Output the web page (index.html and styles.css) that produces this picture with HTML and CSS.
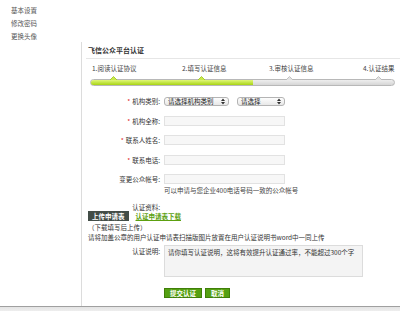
FILE: index.html
```html
<!DOCTYPE html>
<html lang="zh-CN">
<head>
    <meta charset="UTF-8">
    <title>飞信公众平台认证</title>
    <link rel="stylesheet" href="styles.css">
</head>
<body>

    <ul class="side-menu">
        <li>基本设置</li>
        <li>修改密码</li>
        <li>更换头像</li>
    </ul>

    <div class="main">
        <div class="panel-title">飞信公众平台认证</div>

        <div class="steps">
            <div class="step-labels">
                <span class="step step-1">1.阅读认证协议</span>
                <span class="step step-2">2.填写认证信息</span>
                <span class="step step-3">3.审核认证信息</span>
                <span class="step step-4">4.认证结果</span>
            </div>
            <div class="progress">
                <div class="progress-fill"></div>
                <svg class="notch notch-1" width="7" height="4" viewBox="0 0 7 4"><path d="M0 4 L3.5 0.5 L7 4" fill="#c9ea4a" stroke="#9cc21e" stroke-width="0.8"/></svg>
                <svg class="notch notch-2" width="7" height="4" viewBox="0 0 7 4"><path d="M0 4 L3.5 0.5 L7 4" fill="#c9ea4a" stroke="#9cc21e" stroke-width="0.8"/></svg>
                <svg class="notch notch-3" width="7" height="4" viewBox="0 0 7 4"><path d="M0 4 L3.5 0.5 L7 4" fill="#e2e2e2" stroke="#b8b8b8" stroke-width="0.8"/></svg>
                <svg class="notch notch-4" width="7" height="4" viewBox="0 0 7 4"><path d="M0 4 L3.5 0.5 L7 4" fill="#e2e2e2" stroke="#b8b8b8" stroke-width="0.8"/></svg>
            </div>
        </div>

        <div class="form">
            <div class="row">
                <label class="row-label"><em>*</em>机构类别:</label>
                <div class="row-field">
                    <span class="select-box select-wide">请选择机构类别
                        <svg class="arrows" width="4" height="7" viewBox="0 0 4 7"><path d="M0 3 L2 0.5 L4 3 Z M0 4 L2 6.5 L4 4 Z" fill="#333"/></svg>
                    </span>
                    <span class="select-box select-narrow">请选择
                        <svg class="arrows" width="4" height="7" viewBox="0 0 4 7"><path d="M0 3 L2 0.5 L4 3 Z M0 4 L2 6.5 L4 4 Z" fill="#333"/></svg>
                    </span>
                </div>
            </div>
            <div class="row">
                <label class="row-label"><em>*</em>机构全称:</label>
                <div class="row-field"><input type="text" class="text-input"></div>
            </div>
            <div class="row">
                <label class="row-label"><em>*</em>联系人姓名:</label>
                <div class="row-field"><input type="text" class="text-input"></div>
            </div>
            <div class="row">
                <label class="row-label"><em>*</em>联系电话:</label>
                <div class="row-field"><input type="text" class="text-input"></div>
            </div>
            <div class="row">
                <label class="row-label">变更公众帐号:</label>
                <div class="row-field"><input type="text" class="text-input"></div>
            </div>
            <div class="hint">可以申请与您企业400电话号码一致的公众帐号</div>

            <div class="row row-plain">
                <label class="row-label">认证资料:</label>
            </div>
            <div class="upload">
                <button class="upload-btn">上传申请表</button>
                <a class="download-link" href="#">认证申请表下载</a>
            </div>
            <div class="note">（下载填写后上传）</div>
            <div class="note">请将加盖公章的用户认证申请表扫描版图片放置在用户认证说明书word中一同上传</div>

            <div class="row row-textarea">
                <label class="row-label">认证说明:</label>
                <div class="row-field">
                    <textarea class="desc" placeholder="请你填写认证说明，这将有效提升认证通过率，不能超过300个字"></textarea>
                </div>
            </div>

            <div class="actions">
                <button class="green-btn">提交认证</button>
                <button class="green-btn">取消</button>
            </div>
        </div>
    </div>

    <div class="footer-bar"></div>

</body>
</html>
```

FILE: styles.css
```css
body {
    margin: 0;
    font-family: "Noto Sans CJK SC", "Noto Sans", sans-serif;
    font-size: 6.5px;
    color: #333;
    background-color: #fff;
    overflow: hidden;
}
.side-menu {
    list-style-type: none;
    margin: 0;
    padding: 4px 0 0 11px;
    height: 38px;
    color: #555;
}
.side-menu li {
    line-height: 13px;
}
.main {
    margin-left: 81px;
    border-left: 1px solid #dcdcdc;
    height: 264px;
}
.panel-title {
    margin-left: 4px;
    padding: 4px 0 3px 2px;
    line-height: 9px;
    font-size: 7px;
    font-weight: bold;
    color: #333;
    border-bottom: 1px solid #e6e6e6;
}
.steps {
    margin: 5px 0 0 8px;
    width: 305px;
}
.step-labels {
    display: flex;
    line-height: 8px;
    color: #444;
    padding-left: 2px;
}
.step-1 { width: 90px; }
.step-2 { width: 87px; }
.step-3 { width: 94px; }
.progress {
    position: relative;
    margin-top: 7px;
    height: 5px;
    border: 1px solid #b8b8b8;
    border-radius: 4px;
    background: linear-gradient(#eeeeee, #d6d6d6);
}
.progress-fill {
    width: 162px;
    height: 100%;
    border-radius: 4px 0 0 4px;
    background: linear-gradient(#e0f77a, #a8d414);
}
.notch {
    position: absolute;
    top: -4px;
}
.notch-1 { left: 19px; }
.notch-2 { left: 107px; }
.notch-3 { left: 195px; }
.notch-4 { left: 284px; }

.form {
    margin-top: 10px;
}
.row {
    display: grid;
    grid-template-columns: 78px 1fr;
    column-gap: 4px;
    align-items: center;
    height: 10px;
    margin-bottom: 9.5px;
}
.row-label {
    text-align: right;
    color: #333;
    white-space: nowrap;
}
.row-label em {
    font-style: normal;
    color: #e0201a;
    margin-right: 2px;
}
.row-field {
    display: flex;
    gap: 8px;
    align-items: center;
}
.text-input {
    box-sizing: border-box;
    width: 121px;
    height: 10px;
    margin: 0;
    padding: 0;
    border: 1px solid #e2e2e2;
    background-color: #f7f7f7;
}
.select-box {
    position: relative;
    box-sizing: border-box;
    height: 9px;
    line-height: 7px;
    padding-left: 3px;
    border: 1px solid #b4b4b4;
    border-radius: 3px;
    background: linear-gradient(#fdfdfd, #e8e8e8);
    color: #222;
}
.select-wide { width: 65px; }
.select-narrow { width: 48px; }
.arrows {
    position: absolute;
    right: 3px;
    top: 0;
}
.hint {
    margin: -7.5px 0 0 82px;
    line-height: 8px;
    color: #444;
}
.row-plain {
    margin: 8px 0 1px;
    height: 8px;
}
.upload {
    display: flex;
    align-items: center;
    gap: 7px;
    margin-left: 6px;
}
.upload-btn {
    height: 10px;
    padding: 0 4px;
    border: none;
    background-color: #434d47;
    color: #fff;
    font-family: inherit;
    font-size: 6.5px;
    font-weight: bold;
    line-height: 10px;
}
.download-link {
    color: #5ca010;
    font-weight: bold;
}
.note {
    margin-left: 6px;
    line-height: 8px;
    margin-top: 2px;
    color: #333;
}
.row-textarea {
    align-items: start;
    height: 32px;
    margin-top: 4px;
    margin-bottom: 0;
}
.row-textarea .row-label {
    padding-top: 2px;
    line-height: 8px;
}
.desc {
    box-sizing: border-box;
    width: 199px;
    height: 32px;
    margin: 0;
    padding: 2px 3px;
    border: 1px solid #dcdcdc;
    background-color: #f4f4f4;
    font-family: inherit;
    font-size: 6.5px;
    line-height: 8px;
    resize: none;
}
.desc::placeholder {
    color: #333;
}
.actions {
    display: flex;
    gap: 3px;
    margin: 11px 0 0 82px;
}
.green-btn {
    height: 10px;
    padding: 0 5px;
    border: 1px solid #3f7f08;
    background-color: #55a012;
    color: #fff;
    font-family: inherit;
    font-size: 6.5px;
    font-weight: bold;
    line-height: 8px;
}
.footer-bar {
    height: 5px;
    border-top: 1px solid #a0a0a0;
    background: linear-gradient(#e4e4e4, #f0f0f0);
}
```
